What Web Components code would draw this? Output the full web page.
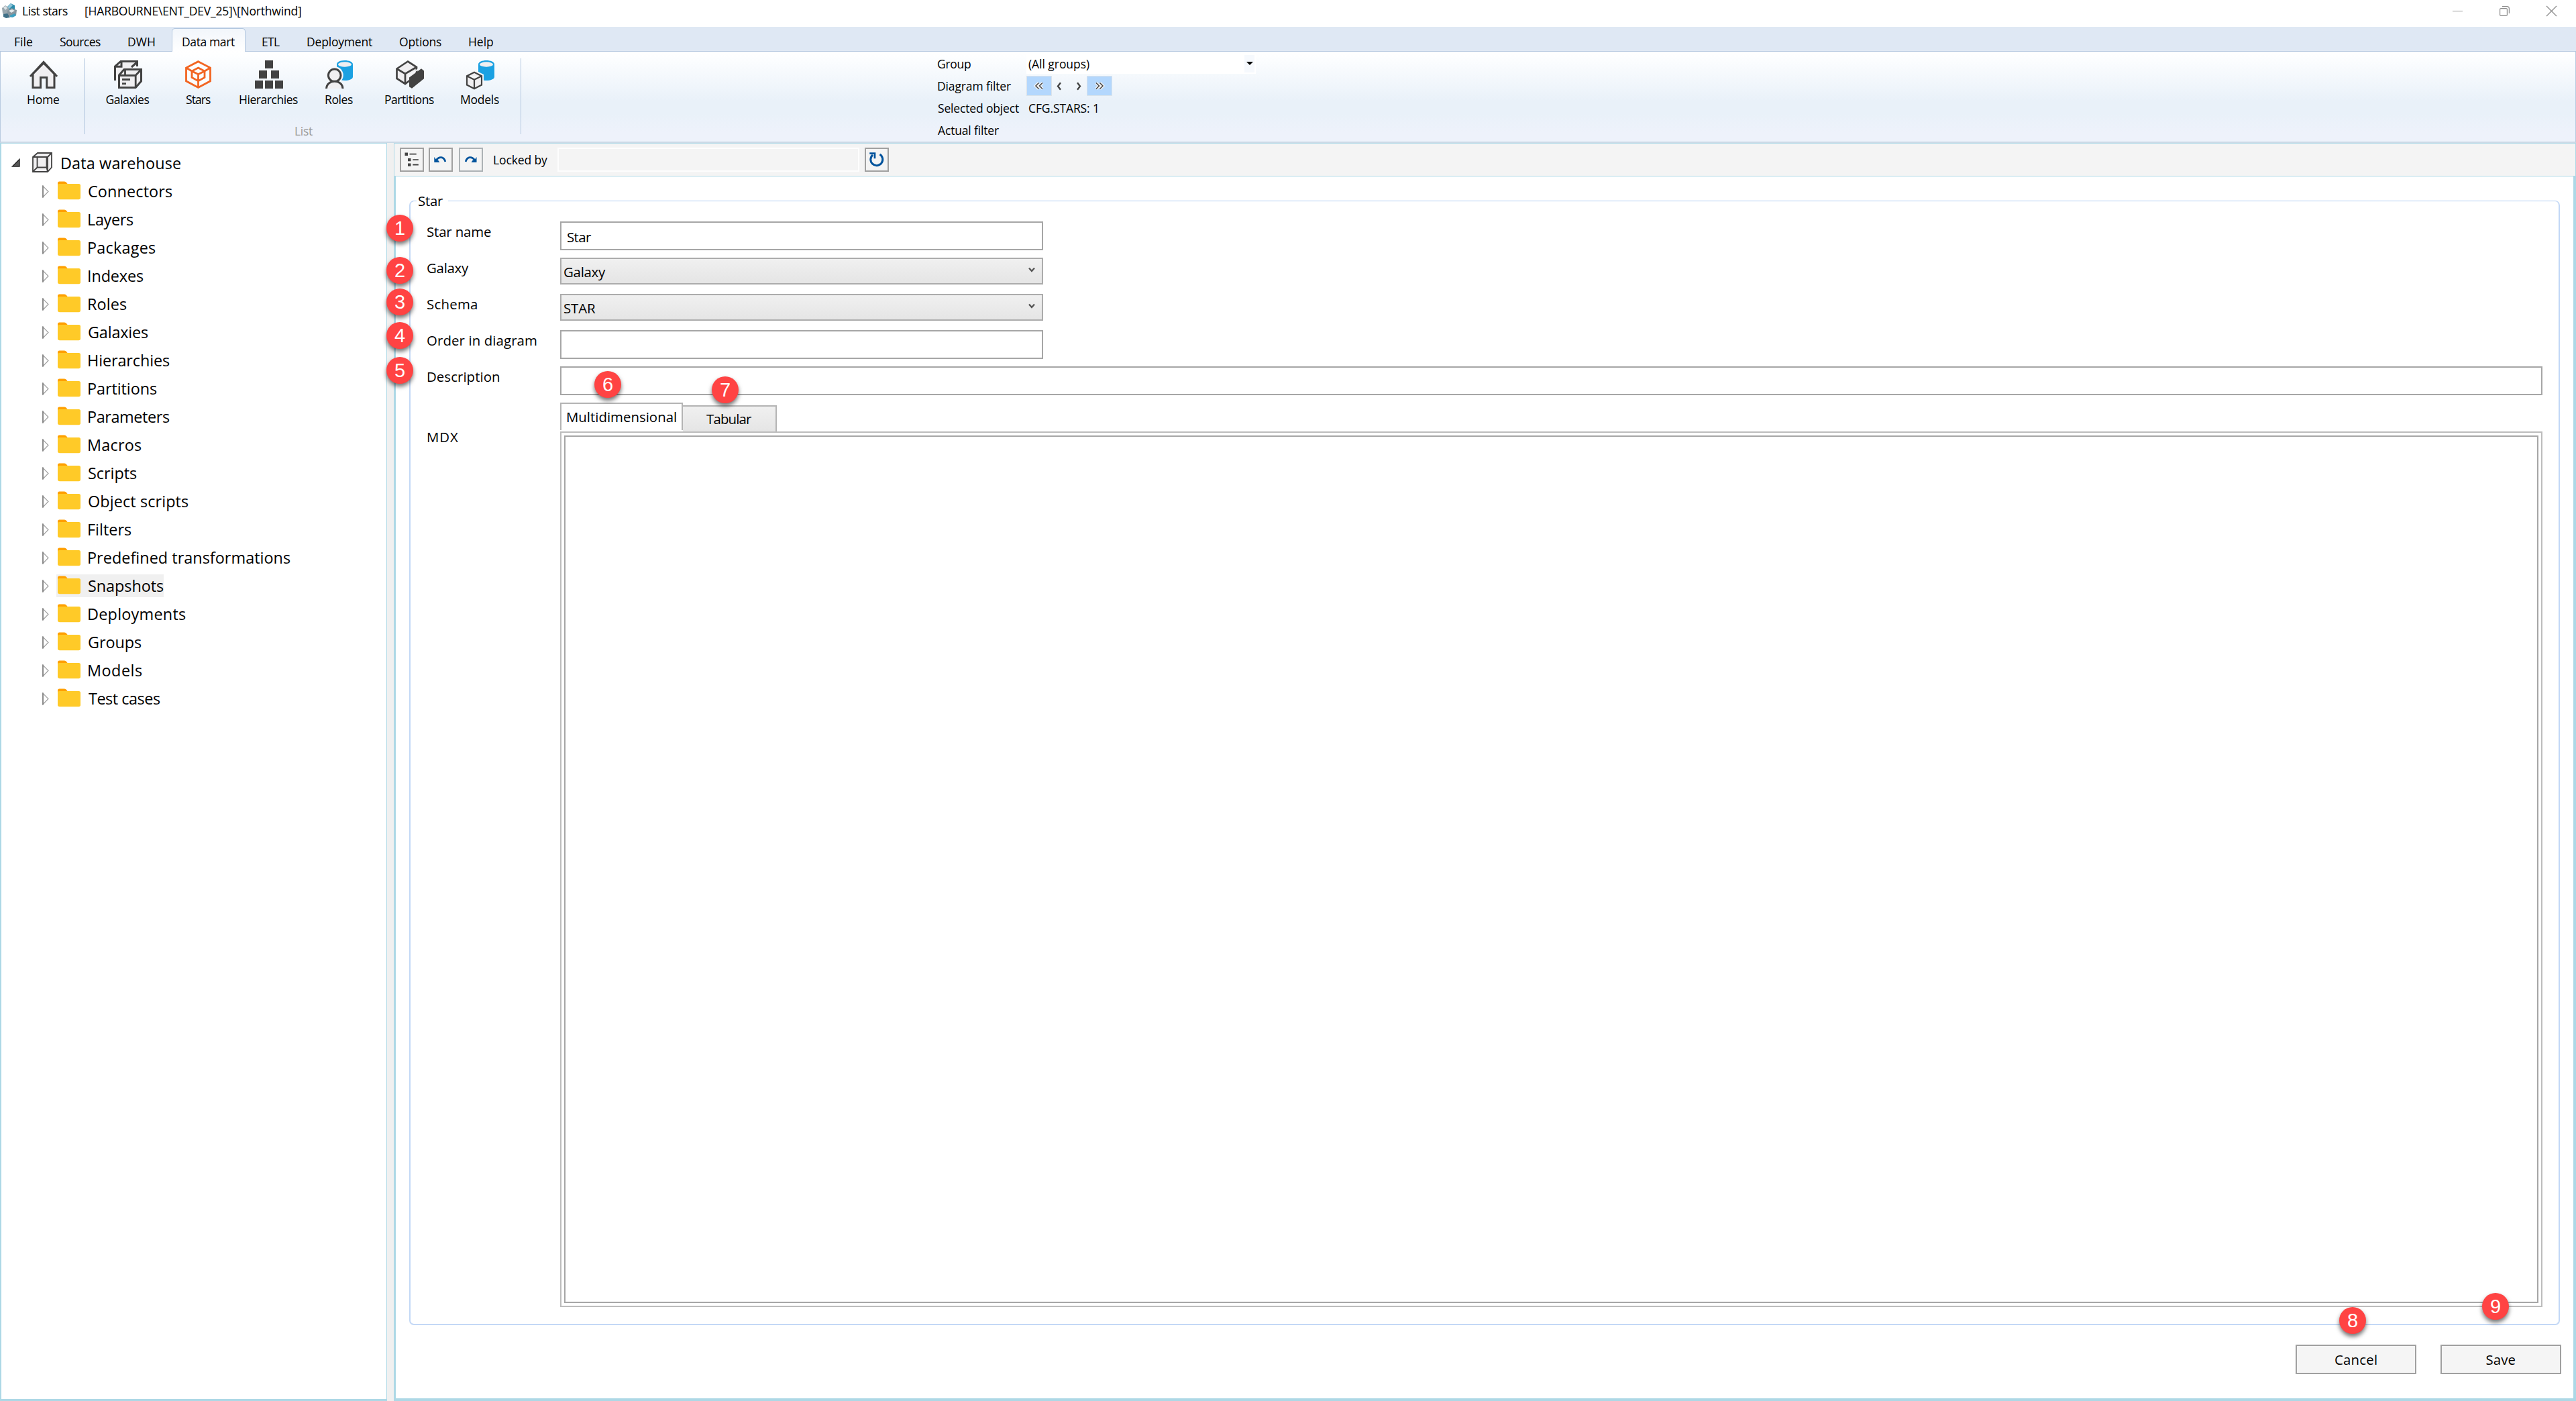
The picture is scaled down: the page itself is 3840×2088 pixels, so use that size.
<!DOCTYPE html>
<html lang="en">
<head>
<meta charset="utf-8">
<title>List stars</title>
<style>
  html, body {
    margin: 0;
    padding: 0;
  }
  body {
    width: 3840px;
    height: 2088px;
    overflow: hidden;
    background: #fff;
    color: #000;
    font-family: "Open Sans", "Noto Sans", sans-serif;
  }
</style>
</head>
<body>
<app-window></app-window>

<script>
const ICONS = {
  logo: `<svg width="24" height="26" viewBox="0 0 24 26"><path d="M7 10 14 3l6 3v6l-6 3-7-1Z" fill="#2a8cab"/><path d="M9 9 14 3l3 3-5 5Z" fill="#8fc4d8"/><path d="M1 10 6 6l5 4v9l-6 2-3-3Z" fill="#9aa7ae"/><path d="m3 9 3-2 3 3-3 3Z" fill="#dce3e6"/><path d="m9 14 6-4 8 3-1 8-8 3-5-4Z" fill="#87959d"/><path d="m11 14 5-2 4 2-5 3Z" fill="#e2e8ea"/><path d="m3 19 6-1 4 6-6 1-4-2Z" fill="#3f6f86"/><path d="m13 21 7-3 2 3-5 3-4-1Z" fill="#3b9fc0"/></svg>`,
  home: `<svg width="42" height="42" viewBox="0 0 42 42"><path d="M5 20 21 4l16 16v20.500H25.700V25.500H16.500V40.500H5Z" fill="#f0eff1" stroke="#424242" stroke-width="3"/><path d="M1 24 21 2.500 41 24" fill="none" stroke="#424242" stroke-width="3"/></svg>`,
  galaxies: `<svg width="42" height="42" viewBox="0 0 42 42" stroke="#424242" stroke-width="3"><path d="M1.500 30V9L10 1.500h24.500V9l-4-1-6 5H16L9 20v10Z" fill="#f0eff1" stroke="none"/><path d="M1.500 30V9L10 1.500h24.500V9M1.500 9.300H11V2M34 3l-8 7" fill="none"/><path d="M7.500 22 15 13.500h25.500V31l-8.300 9.500H7.500Z" fill="#f0eff1"/><path d="M7.500 22.500h24.700v18M32 22.500l8.500-9M16.500 14v8M12 28.500h12M12 34.700h6" fill="none" stroke-width="2.800"/></svg>`,
  stars: `<svg width="39" height="42" viewBox="0 0 39 42" fill="#fff" fill-opacity=".6" stroke="#f26522" stroke-width="2.800"><path d="m19.500 1.700 18 9.300v19.800l-18 9.700-18-9.700V11Z"/><path d="m19.500 11 9.500 5v9.500l-9.500 5.200-9.500-5.200V16ZM1.500 11l8.500 5 9.500 4.800L29 16l8.500-5M19.500 20.800v19.500" fill="none"/></svg>`,
  hierarchies: `<svg width="42" height="42" viewBox="0 0 42 42" fill="#424242"><path d="M15 0h12v12H15ZM6 15h12v12H6ZM24 15h12v12H24ZM0 30h12v12H0ZM15 30h12v12H15ZM30 30h12v12H30Z"/></svg>`,
  roles: `<svg width="42" height="42" viewBox="0 0 42 42"><path d="M17 6C17-2 41-2 41 6v18.500c0 7.300-24 7.300-24 0Z" fill="#1ba1e2"/><ellipse cx="29" cy="6" rx="10" ry="3.700" fill="#f0eff1"/><circle cx="13.700" cy="22" r="13" fill="#f6f8fa"/><circle cx="13.700" cy="22.300" r="9.300" fill="#f0eff1" stroke="#424242" stroke-width="3"/><path d="M1.500 42c1-14.500 23.500-14.500 24.500 0" fill="#f0eff1" stroke="#424242" stroke-width="3"/></svg>`,
  partitions: `<svg width="42" height="42" viewBox="0 0 42 42"><path d="m1.500 12.500 16.500-11L31 10v12L14 35 1.500 27Z" fill="#f0eff1" stroke="#424242" stroke-width="2.700"/><path d="M1.500 12.500 14 20l17-10M14 20v15" fill="none" stroke="#424242" stroke-width="2.700"/><path d="m18 24 19.500-14" stroke="#f4f6f9" stroke-width="2"/><path d="m20 25.500 18-13.300 4 3.300v11.800L24 41.700l-4-2.500Z" fill="#424242"/></svg>`,
  models: `<svg width="42" height="42" viewBox="0 0 42 42"><path d="M18 6c0-8 24-8 24 0v18.500c0 7.300-24 7.300-24 0Z" fill="#1ba1e2"/><ellipse cx="30" cy="6" rx="10" ry="3.700" fill="#f0eff1"/><path d="m12 14 14 7v17l-14 5-10-5V21Z" fill="#f6f8fa"/><path d="m12 17.800 11 5.400v13.300l-11 5.700-11-5.700V23.200ZM1 23.200l11 5.600 11-5.600M12 28.800v13" fill="#f0eff1" stroke="#424242" stroke-width="2.200"/></svg>`,
  warehouse: `<svg width="30" height="30" viewBox="0 0 30 30" stroke="#424242" stroke-width="1.800"><path d="m1 7 7-6h21v21.500L23 29H1Z" fill="#f0eff1"/><path d="M1 7h22v22M23 7l6-6M7.500 7v15.500h14V7M1 29l6.500-6.500M23 29l-1.500-6.500" fill="none"/></svg>`,
  folder: `<svg width="34" height="28" viewBox="0 0 34 28"><path d="M0 3Q0 .5 2.500.5H10q2 0 3 1.500l2 2.500V10H0Z" fill="#ffa000"/><path d="M0 6q0-2 2-2h29.500Q34 4 34 6.500v18q0 2.700-2.700 2.700H3q-3 0-3-2.700Z" fill="#ffca28"/></svg>`,
  open: `<svg width="14" height="14" viewBox="0 0 14 14"><path d="M12 1.500V12H1.500Z" fill="#595959" stroke="#262626" stroke-width="1.400"/></svg>`,
  closed: `<svg width="10" height="19" viewBox="0 0 10 19"><path d="M1 1.300 9 9.500 1 17.700Z" fill="#fff" stroke="#a0a0a0" stroke-width="1.200"/><path d="M1 .5v18" stroke="#868686" stroke-width="1.800"/></svg>`,
  list: `<svg width="32" height="32" viewBox="2 2 32 32"><path d="M7.500 7.500H12V12H7.500ZM12 16h4.500v4.300H12ZM12 23.500h4.500v4.300H12Z" fill="#424242"/><path d="M14.500 9.600h10.200M19.300 18.200h8.500M19.300 25.500h8.500" stroke="#424242" stroke-width="1.800"/></svg>`,
  undo: `<svg width="32" height="32" viewBox="2 2 32 32"><path d="M11.500 18.500c4-6 11.500-5 13.300 2.500" fill="none" stroke="#00539c" stroke-width="2.700"/><path d="M8.300 14v8h8l-2-3-3-1Z" fill="#00539c"/></svg>`,
  redo: `<svg width="32" height="32" viewBox="2 2 32 32"><path d="M23.500 18.500c-4-6-11.500-5-13.300 2.500" fill="none" stroke="#00539c" stroke-width="2.700"/><path d="M26.500 14v8h-8l2-3 3-1Z" fill="#00539c"/></svg>`,
  refresh: `<svg width="32" height="32" viewBox="2 2 32 32"><path d="M22.500 10a9 9 0 1 1-10.500.8" fill="none" stroke="#00539c" stroke-width="3"/><path d="M7.300 8.700H15v7.500" fill="none" stroke="#00539c" stroke-width="2.700"/></svg>`,
  chevron: `<svg width="10" height="9" viewBox="0 0 10 9"><path d="m1 1.500 4 4.500 4-4.500" fill="none" stroke="#555" stroke-width="2.400"/></svg>`,
  prev: `<svg width="7" height="13" viewBox="0 0 7 13"><path d="M6 1.200 2 6.500l4 5.300" fill="none" stroke="#444" stroke-width="2.400"/></svg>`,
  next: `<svg width="7" height="13" viewBox="0 0 7 13"><path d="m1 1.200 4 5.300-4 5.300" fill="none" stroke="#444" stroke-width="2.400"/></svg>`,
  first: `<svg width="16" height="14" viewBox="0 0 16 14" fill="none"><path d="M7.500 2.500 3 7l4.500 4.500M13 2.500 8.500 7l4.500 4.500" stroke="#f4f4f4" stroke-width="4.200"/><path d="M7.500 2.500 3 7l4.500 4.500M13 2.500 8.500 7l4.500 4.500" stroke="#444" stroke-width="1.500"/></svg>`,
  last: `<svg width="16" height="14" viewBox="0 0 16 14" fill="none"><path d="M3 2.500 7.500 7 3 11.500M8.500 2.500 13 7l-4.500 4.500" stroke="#f4f4f4" stroke-width="4.200"/><path d="M3 2.500 7.500 7 3 11.500M8.500 2.500 13 7l-4.500 4.500" stroke="#444" stroke-width="1.500"/></svg>`,
  minimize: `<svg width="15" height="15" viewBox="0 0 15 15"><path d="M0 7.500h15" stroke="#999"/></svg>`,
  restore: `<svg width="15" height="15" viewBox="0 0 15 15" fill="none" stroke="#8c8c8c"><rect x=".6" y="3.600" width="10.800" height="10.800" rx="1.500" stroke-width="1.200"/><path d="M4 .6h7q3.400 0 3.400 3.400v7" stroke-width="1.200"/></svg>`,
  close: `<svg width="15" height="15" viewBox="0 0 15 15"><path d="m0 0 15 15M15 0 0 15" stroke="#8c8c8c" stroke-width="1.300"/></svg>`
};

const meter = document.createElement("canvas").getContext("2d");

// One line of text, tracked so that its ink fills the given width.
class FitText extends HTMLElement {
  connectedCallback() {
    if (this.shadowRoot) return;
    const text = this.getAttribute("text");
    const width = Number(this.getAttribute("w"));
    const size = Number(this.getAttribute("size") || 17.5);
    meter.font = `${size}px "Open Sans"`;
    const m = meter.measureText(text);
    const ink = m.actualBoundingBoxLeft + m.actualBoundingBoxRight;
    const spacing = text.length > 1 ? (width - ink) / (text.length - 1) : 0;
    this.attachShadow({ mode: "open" }).innerHTML = `
      <style>
        :host {
          display: block;
          flex: none;
          width: ${width}px;
          height: ${Math.round(size * 1.47)}px;
          line-height: ${Math.round(size * 1.47)}px;
          font-size: ${size}px;
          letter-spacing: ${spacing.toFixed(3)}px;
          white-space: nowrap;
        }
        span {
          margin-left: ${m.actualBoundingBoxLeft.toFixed(2)}px;
        }
      </style>
      <span>${text}</span>
    `;
  }
}

class AppIcon extends HTMLElement {
  connectedCallback() {
    if (this.shadowRoot) return;
    this.attachShadow({ mode: "open" }).innerHTML = `
      <style>
        :host {
          display: block;
          flex: none;
        }
        svg {
          display: block;
          overflow: visible;
        }
      </style>
      ${ICONS[this.getAttribute("name")]}
    `;
  }
}

class TitleBar extends HTMLElement {
  connectedCallback() {
    this.attachShadow({ mode: "open" }).innerHTML = `
      <style>
        :host {
          display: flex;
          height: 40px;
          box-sizing: border-box;
          padding: 3px 29px 0 2px;
          background: #fff;
        }
        .name {
          margin: 0 26px 0 8px;
        }
        .controls {
          display: flex;
          gap: 55px;
          margin: 6px 0 0 auto;
        }
      </style>
      <app-icon name="logo" style="margin-top:-1px"></app-icon>
      <fit-text class="name" text="List stars" w="67"></fit-text>
      <fit-text text="[HARBOURNE\\ENT_DEV_25]\\[Northwind]" w="322"></fit-text>
      <div class="controls">
        <app-icon name="minimize"></app-icon>
        <app-icon name="restore"></app-icon>
        <app-icon name="close"></app-icon>
      </div>
    `;
  }
}

class MenuTabs extends HTMLElement {
  connectedCallback() {
    const tabs = [["File", 26], ["Sources", 61], ["DWH", 40], ["Data mart", 78], ["ETL", 26], ["Deployment", 97], ["Options", 62], ["Help", 36]];
    this.attachShadow({ mode: "open" }).innerHTML = `
      <style>
        :host {
          display: flex;
          gap: 9px;
          height: 37px;
          box-sizing: border-box;
          padding: 2px 0 0 6px;
          background: #dfe8f4;
          box-shadow: inset 0 -1px #b3c7df;
        }
        div {
          box-sizing: border-box;
          height: 35px;
          padding: 6px 15px 0;
          border: 1px solid transparent;
          border-bottom: 0;
        }
        .active {
          border-color: #b3c7df;
          border-radius: 5px 5px 0 0;
          background: linear-gradient(#f2f6fb, #fff);
        }
      </style>
      ${tabs.map(([t, w]) => `<div class="${t === "Data mart" ? "active" : ""}"><fit-text text="${t}" w="${w}"></fit-text></div>`).join("")}
    `;
  }
}

class RibbonButton extends HTMLElement {
  connectedCallback() {
    this.attachShadow({ mode: "open" }).innerHTML = `
      <style>
        :host {
          display: flex;
          flex-direction: column;
          align-items: center;
          gap: 3px;
          width: 105px;
        }
      </style>
      <app-icon name="${this.getAttribute("icon")}"></app-icon>
      <fit-text text="${this.getAttribute("label")}" w="${this.getAttribute("w")}"></fit-text>
    `;
  }
}

class RibbonInfo extends HTMLElement {
  connectedCallback() {
    this.attachShadow({ mode: "open" }).innerHTML = `
      <style>
        :host {
          display: grid;
          grid-template-columns: 132px 342px;
          grid-auto-rows: 33px;
        }
        :host > fit-text {
          margin-top: 5px;
        }
        .group {
          display: flex;
          justify-content: space-between;
          box-sizing: border-box;
          height: 30px;
          margin-top: 3px;
          padding: 2px 2px 2px 3px;
          background: #fff;
        }
        .drop {
          width: 15px;
          background: #f6f9fd;
        }
        .drop::after {
          content: "";
          display: block;
          margin: 10px 0 0 3px;
          width: 0;
          border: 5px solid transparent;
          border-top-color: #000;
          border-bottom: 0;
        }
        .filter {
          display: flex;
          align-items: center;
          height: 30px;
          margin-top: 3px;
        }
        .filter > div {
          display: grid;
          place-items: center;
          box-sizing: border-box;
          width: 38px;
          height: 30px;
          border: 1px solid #dbe3ea;
          background: #b3d7fd;
        }
        .prev {
          margin: 0 23px 0 7px;
        }
        .next {
          margin-right: 8px;
        }
        .value {
          margin-left: 4px;
        }
      </style>
      <fit-text text="Group" w="49"></fit-text>
      <div class="group"><fit-text text="(All groups)" w="91"></fit-text><div class="drop"></div></div>
      <fit-text text="Diagram filter" w="109"></fit-text>
      <div class="filter">
        <div><app-icon name="first"></app-icon></div>
        <app-icon class="prev" name="prev"></app-icon>
        <app-icon class="next" name="next"></app-icon>
        <div><app-icon name="last"></app-icon></div>
      </div>
      <fit-text text="Selected object" w="121"></fit-text>
      <fit-text class="value" text="CFG.STARS: 1" w="102"></fit-text>
      <fit-text text="Actual filter" w="91"></fit-text>
    `;
  }
}

class AppRibbon extends HTMLElement {
  connectedCallback() {
    this.attachShadow({ mode: "open" }).innerHTML = `
      <style>
        :host {
          display: flex;
          box-sizing: border-box;
          height: 136px;
          border: 1px solid #b9cbe0;
          border-top: 0;
          border-bottom: 2px solid #cbd9e6;
          background: linear-gradient(#fff, #fdfeff 6%, #e9f1f9 55%, #e9f1f9 70%, #eef2fb 90%);
        }
        .home {
          padding: 13px 8px 0 11px;
        }
        .sep {
          width: 1px;
          height: 113px;
          margin-top: 10px;
          background: #b3c7df;
        }
        .list {
          padding: 13px 8px 0 12px;
        }
        .row {
          display: flex;
          height: 92px;
        }
        .caption {
          display: flex;
          justify-content: center;
          color: #9a9a9a;
        }
        ribbon-info {
          margin-left: 621px;
        }
      </style>
      <div class="home"><ribbon-button icon="home" label="Home" w="47"></ribbon-button></div>
      <div class="sep"></div>
      <div class="list">
        <div class="row">
          <ribbon-button icon="galaxies" label="Galaxies" w="64"></ribbon-button>
          <ribbon-button icon="stars" label="Stars" w="37"></ribbon-button>
          <ribbon-button icon="hierarchies" label="Hierarchies" w="87"></ribbon-button>
          <ribbon-button icon="roles" label="Roles" w="41"></ribbon-button>
          <ribbon-button icon="partitions" label="Partitions" w="73"></ribbon-button>
          <ribbon-button icon="models" label="Models" w="57"></ribbon-button>
        </div>
        <div class="caption"><fit-text text="List" w="26"></fit-text></div>
      </div>
      <div class="sep"></div>
      <ribbon-info></ribbon-info>
    `;
  }
}

class NavTree extends HTMLElement {
  connectedCallback() {
    const items = [
      ["Connectors", 125], ["Layers", 67], ["Packages", 100], ["Indexes", 82], ["Roles", 57],
      ["Galaxies", 89], ["Hierarchies", 121], ["Partitions", 102], ["Parameters", 121], ["Macros", 79],
      ["Scripts", 72], ["Object scripts", 149], ["Filters", 64], ["Predefined transformations", 301],
      ["Snapshots", 112], ["Deployments", 145], ["Groups", 79], ["Models", 80], ["Test cases", 107]
    ];
    this.attachShadow({ mode: "open" }).innerHTML = `
      <style>
        :host {
          display: block;
          box-sizing: border-box;
          width: 577px;
          padding-top: 8px;
          border: 1px solid #add8e6;
          border-left-width: 2px;
          border-bottom-width: 3px;
          background: #fff;
        }
        .row {
          display: flex;
          align-items: center;
          height: 42px;
          padding-left: 61px;
        }
        .root {
          padding-left: 15px;
        }
        .root app-icon[name="open"] {
          margin-right: 17px;
        }
        .root app-icon[name="warehouse"] {
          margin-top: -2px;
        }
        .root fit-text {
          margin: -1px 0 0 14px;
        }
        .item {
          display: flex;
          align-items: center;
          height: 34px;
          margin-left: 11px;
          padding-left: 2px;
        }
        .item fit-text {
          margin: 0 0 0 12px;
        }
        .item app-icon {
          margin-top: -2px;
        }
        .selected {
          background: #f0f0f0;
        }
      </style>
      <div class="row root"><app-icon name="open"></app-icon><app-icon name="warehouse"></app-icon><fit-text size="23.4" text="Data warehouse" w="177"></fit-text></div>
      ${items.map(([t, w]) => `<div class="row"><app-icon name="closed"></app-icon><div class="item ${t === "Snapshots" ? "selected" : ""}"><app-icon name="folder"></app-icon><fit-text size="23.4" text="${t}" w="${w}"></fit-text></div></div>`).join("")}
    `;
  }
}

class ToolBar extends HTMLElement {
  connectedCallback() {
    this.attachShadow({ mode: "open" }).innerHTML = `
      <style>
        :host {
          display: flex;
          box-sizing: border-box;
          height: 50px;
          padding: 6px 0 0 8px;
          border: 1px solid #add8e6;
          background: #f4f4f4;
        }
        .btn {
          box-sizing: border-box;
          width: 36px;
          height: 36px;
          margin-right: 7px;
          border: 2px solid #a0a0a0;
        }
        .redo {
          margin: 0 16px 0 2px;
          border-color: #adb2b5;
        }
        .lock {
          box-sizing: border-box;
          width: 450px;
          height: 36px;
          margin: 0 8px 0 15px;
          border: 2px solid #fdfdfd;
        }
        fit-text {
          margin-top: 5px;
        }
      </style>
      <div class="btn"><app-icon name="list"></app-icon></div>
      <div class="btn"><app-icon name="undo"></app-icon></div>
      <div class="btn redo"><app-icon name="redo"></app-icon></div>
      <fit-text text="Locked by" w="80"></fit-text>
      <div class="lock"></div>
      <div class="btn"><app-icon name="refresh"></app-icon></div>
    `;
  }
}

class FormField extends HTMLElement {
  connectedCallback() {
    const kind = this.getAttribute("kind") || "input";
    const value = this.getAttribute("value");
    const text = value ? `<fit-text size="20.4" text="${value}" w="${this.getAttribute("vw")}"></fit-text>` : "";
    this.attachShadow({ mode: "open" }).innerHTML = `
      <style>
        :host {
          display: flex;
          height: 54px;
        }
        .label {
          width: 198px;
          flex: none;
        }
        .input, .select {
          display: flex;
          box-sizing: border-box;
          width: 720px;
          border: 2px solid #a6a6a6;
        }
        .input {
          height: 43px;
          padding: 6px 9px 0;
          background: #fff;
        }
        .select {
          height: 40px;
          justify-content: space-between;
          padding: 4px 10px 0 4px;
          border-color: #acacac;
          background: linear-gradient(#f0f0f0, #e5e5e5);
        }
        .select app-icon {
          margin-top: 8px;
        }
        :host([wide]) .input {
          flex: 1;
        }
      </style>
      <div class="label"><fit-text size="20.4" text="${this.getAttribute("label")}" w="${this.getAttribute("w")}"></fit-text></div>
      <div class="${kind}">${text}${kind === "select" ? `<app-icon name="chevron"></app-icon>` : ""}</div>
    `;
  }
}

class GroupBox extends HTMLElement {
  connectedCallback() {
    this.attachShadow({ mode: "open" }).innerHTML = `
      <style>
        :host {
          display: flex;
          flex-direction: column;
          box-sizing: border-box;
          padding: 0 24px 25px 25px;
          border: 2px solid #c3d8f6;
          border-top-width: 1px;
          border-top-color: #b0cbf2;
          border-radius: 7px;
        }
        .legend {
          width: max-content;
          margin: -16px 0 16px -16px;
          padding: 0 7px 0 3px;
          background: #fff;
        }
      </style>
      <div class="legend"><fit-text size="20.4" text="${this.getAttribute("legend")}" w="37"></fit-text></div>
      <slot></slot>
    `;
  }
}

class TabEditor extends HTMLElement {
  connectedCallback() {
    this.attachShadow({ mode: "open" }).innerHTML = `
      <style>
        :host {
          display: flex;
          flex: 1;
        }
        .label {
          width: 198px;
          flex: none;
          padding-top: 36px;
        }
        .pane {
          display: flex;
          flex: 1;
          flex-direction: column;
        }
        .tabs {
          display: flex;
          align-items: flex-end;
          height: 43px;
        }
        .tab {
          box-sizing: border-box;
          border: 2px solid #b4b4b4;
          border-bottom: 0;
        }
        .active {
          width: 183px;
          height: 41px;
          margin-bottom: 2px;
          padding: 4px 0 0 8px;
          background: #fff;
        }
        .other {
          width: 140px;
          height: 39px;
          padding: 3px 0 0 35px;
          border-left: 0;
          background: linear-gradient(#f0f0f0, #e5e5e5);
        }
        .frame {
          display: flex;
          flex: 1;
          padding: 4px;
          border: 2px solid #bcbcbc;
        }
        .editor {
          flex: 1;
          border: 2px solid #a6a6a6;
          background: #fff;
        }
      </style>
      <div class="label"><fit-text size="20.4" text="MDX" w="46"></fit-text></div>
      <div class="pane">
        <div class="tabs">
          <div class="tab active"><fit-text size="20.4" text="Multidimensional" w="163"></fit-text></div>
          <div class="tab other"><fit-text size="20.4" text="Tabular" w="68"></fit-text></div>
        </div>
        <div class="frame"><div class="editor"></div></div>
      </div>
    `;
  }
}

class PushButton extends HTMLElement {
  connectedCallback() {
    this.attachShadow({ mode: "open" }).innerHTML = `
      <style>
        :host {
          display: flex;
          justify-content: center;
          box-sizing: border-box;
          width: 180px;
          height: 44px;
          padding-top: 5px;
          border: 2px solid #a0a0a0;
          background: #f5f5f5;
        }
      </style>
      <fit-text size="20.4" text="${this.getAttribute("label")}" w="${this.getAttribute("w")}"></fit-text>
    `;
  }
}

class CallBadge extends HTMLElement {
  connectedCallback() {
    this.attachShadow({ mode: "open" }).innerHTML = `
      <style>
        :host {
          position: absolute;
          left: ${this.getAttribute("x") - 20}px;
          top: ${this.getAttribute("y") - 20}px;
          width: 40px;
          height: 40px;
          border-radius: 50%;
          background: #ff4343;
          box-shadow: 0 4px 6px rgba(0, 0, 0, 0.55);
          color: #fff;
          font: 29px/41px "Liberation Sans", Arial, sans-serif;
          text-align: center;
        }
      </style>
      <slot></slot>
    `;
  }
}

class StarForm extends HTMLElement {
  connectedCallback() {
    this.attachShadow({ mode: "open" }).innerHTML = `
      <style>
        :host {
          display: flex;
          flex: 1;
          flex-direction: column;
          box-sizing: border-box;
          padding: 36px 20px 36px 20px;
          border: solid #add8e6;
          border-width: 0 4px 4px 3px;
          background: #fff;
        }
        group-box {
          flex: 1;
        }
        .actions {
          display: flex;
          justify-content: flex-end;
          gap: 36px;
          margin: 29px -2px 0 0;
        }
      </style>
      <group-box legend="Star">
        <form-field label="Star name" w="95" value="Star" vw="36"></form-field>
        <form-field label="Galaxy" w="62" kind="select" value="Galaxy" vw="62"></form-field>
        <form-field label="Schema" w="74" kind="select" value="STAR" vw="47"></form-field>
        <form-field label="Order in diagram" w="163"></form-field>
        <form-field label="Description" w="107" wide></form-field>
        <tab-editor></tab-editor>
      </group-box>
      <div class="actions">
        <push-button label="Cancel" w="62"></push-button>
        <push-button label="Save" w="43"></push-button>
      </div>
    `;
  }
}

class AppWindow extends HTMLElement {
  connectedCallback() {
    const badges = [[596, 340], [596, 403], [596, 450], [596, 500], [596, 552], [906, 573], [1081, 581], [3507, 1968], [3720, 1947]];
    this.attachShadow({ mode: "open" }).innerHTML = `
      <style>
        :host {
          display: flex;
          flex-direction: column;
          position: relative;
          width: 3840px;
          height: 2088px;
        }
        main {
          display: flex;
          flex: 1;
          background: #f0f0f0;
        }
        section {
          display: flex;
          flex: 1;
          flex-direction: column;
          margin-left: 10px;
        }
      </style>
      <title-bar></title-bar>
      <menu-tabs></menu-tabs>
      <app-ribbon></app-ribbon>
      <main>
        <nav-tree></nav-tree>
        <section>
          <tool-bar></tool-bar>
          <star-form></star-form>
        </section>
      </main>
      ${badges.map(([x, y], i) => `<call-badge x="${x}" y="${y}">${i + 1}</call-badge>`).join("")}
    `;
  }
}

customElements.define("fit-text", FitText);
customElements.define("app-icon", AppIcon);
customElements.define("title-bar", TitleBar);
customElements.define("menu-tabs", MenuTabs);
customElements.define("ribbon-button", RibbonButton);
customElements.define("ribbon-info", RibbonInfo);
customElements.define("app-ribbon", AppRibbon);
customElements.define("nav-tree", NavTree);
customElements.define("tool-bar", ToolBar);
customElements.define("form-field", FormField);
customElements.define("group-box", GroupBox);
customElements.define("tab-editor", TabEditor);
customElements.define("push-button", PushButton);
customElements.define("call-badge", CallBadge);
customElements.define("star-form", StarForm);
customElements.define("app-window", AppWindow);
</script>
</body>
</html>
